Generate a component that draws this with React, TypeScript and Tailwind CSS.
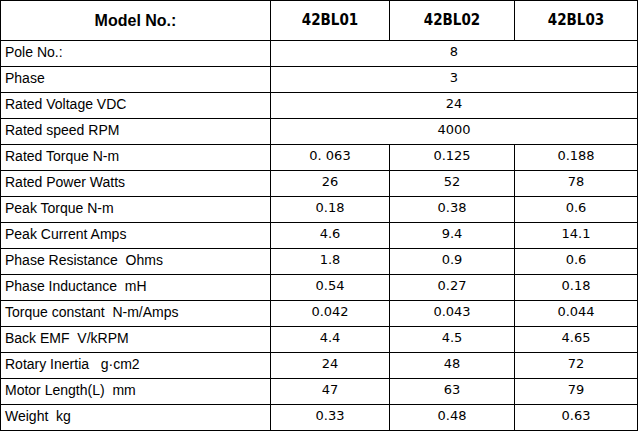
const models = ["42BL01", "42BL02", "42BL03"];

type Row = { label: string; values: string[] };

const rows: Row[] = [
  { label: "Pole No.:", values: ["8"] },
  { label: "Phase", values: ["3"] },
  { label: "Rated Voltage VDC", values: ["24"] },
  { label: "Rated speed RPM", values: ["4000"] },
  { label: "Rated Torque N-m", values: ["0. 063", "0.125", "0.188"] },
  { label: "Rated Power Watts", values: ["26", "52", "78"] },
  { label: "Peak Torque N-m", values: ["0.18", "0.38", "0.6"] },
  { label: "Peak Current Amps", values: ["4.6", "9.4", "14.1"] },
  { label: "Phase Resistance  Ohms", values: ["1.8", "0.9", "0.6"] },
  { label: "Phase Inductance  mH", values: ["0.54", "0.27", "0.18"] },
  { label: "Torque constant  N-m/Amps", values: ["0.042", "0.043", "0.044"] },
  { label: "Back EMF  V/kRPM", values: ["4.4", "4.5", "4.65"] },
  { label: "Rotary Inertia   g·cm2", values: ["24", "48", "72"] },
  { label: "Motor Length(L)  mm", values: ["47", "63", "79"] },
  { label: "Weight  kg", values: ["0.33", "0.48", "0.63"] },
];

const label = "font-['Liberation_Sans',Arial,sans-serif] text-[14px] text-black";
const value = "font-['DejaVu_Sans',Tahoma,sans-serif] text-[13px] text-black";

export default function App() {
  return (
    <div className="w-[640px] h-[431px] bg-white overflow-hidden">
      <table className="w-[637px] border-collapse table-fixed">
        <colgroup>
          <col className="w-[270px]" />
          <col className="w-[119px]" />
          <col className="w-[125px]" />
          <col className="w-[123px]" />
        </colgroup>
        <thead>
          <tr className="h-[40px]">
            <th className="border border-black font-['Liberation_Sans',Arial,sans-serif] text-[16px] font-bold text-black text-center">
              Model No.:
            </th>
            {models.map((m) => (
              <th
                key={m}
                className="border border-black font-['DejaVu_Sans_Condensed','DejaVu_Sans',sans-serif] text-[15px] font-bold text-black text-center"
              >
                {m}
              </th>
            ))}
          </tr>
        </thead>
        <tbody>
          {rows.map((r) => (
            <tr key={r.label} className="h-[26px]">
              <td className={`border border-black px-1 pb-1 leading-none whitespace-pre ${label}`}>
                {r.label}
              </td>
              {r.values.length === 1 ? (
                <td colSpan={3} className={`border border-black text-center pb-1 leading-none ${value}`}>
                  {r.values[0]}
                </td>
              ) : (
                r.values.map((v, i) => (
                  <td key={i} className={`border border-black text-center pb-1 leading-none ${value}`}>
                    {v}
                  </td>
                ))
              )}
            </tr>
          ))}
        </tbody>
      </table>
    </div>
  );
}
